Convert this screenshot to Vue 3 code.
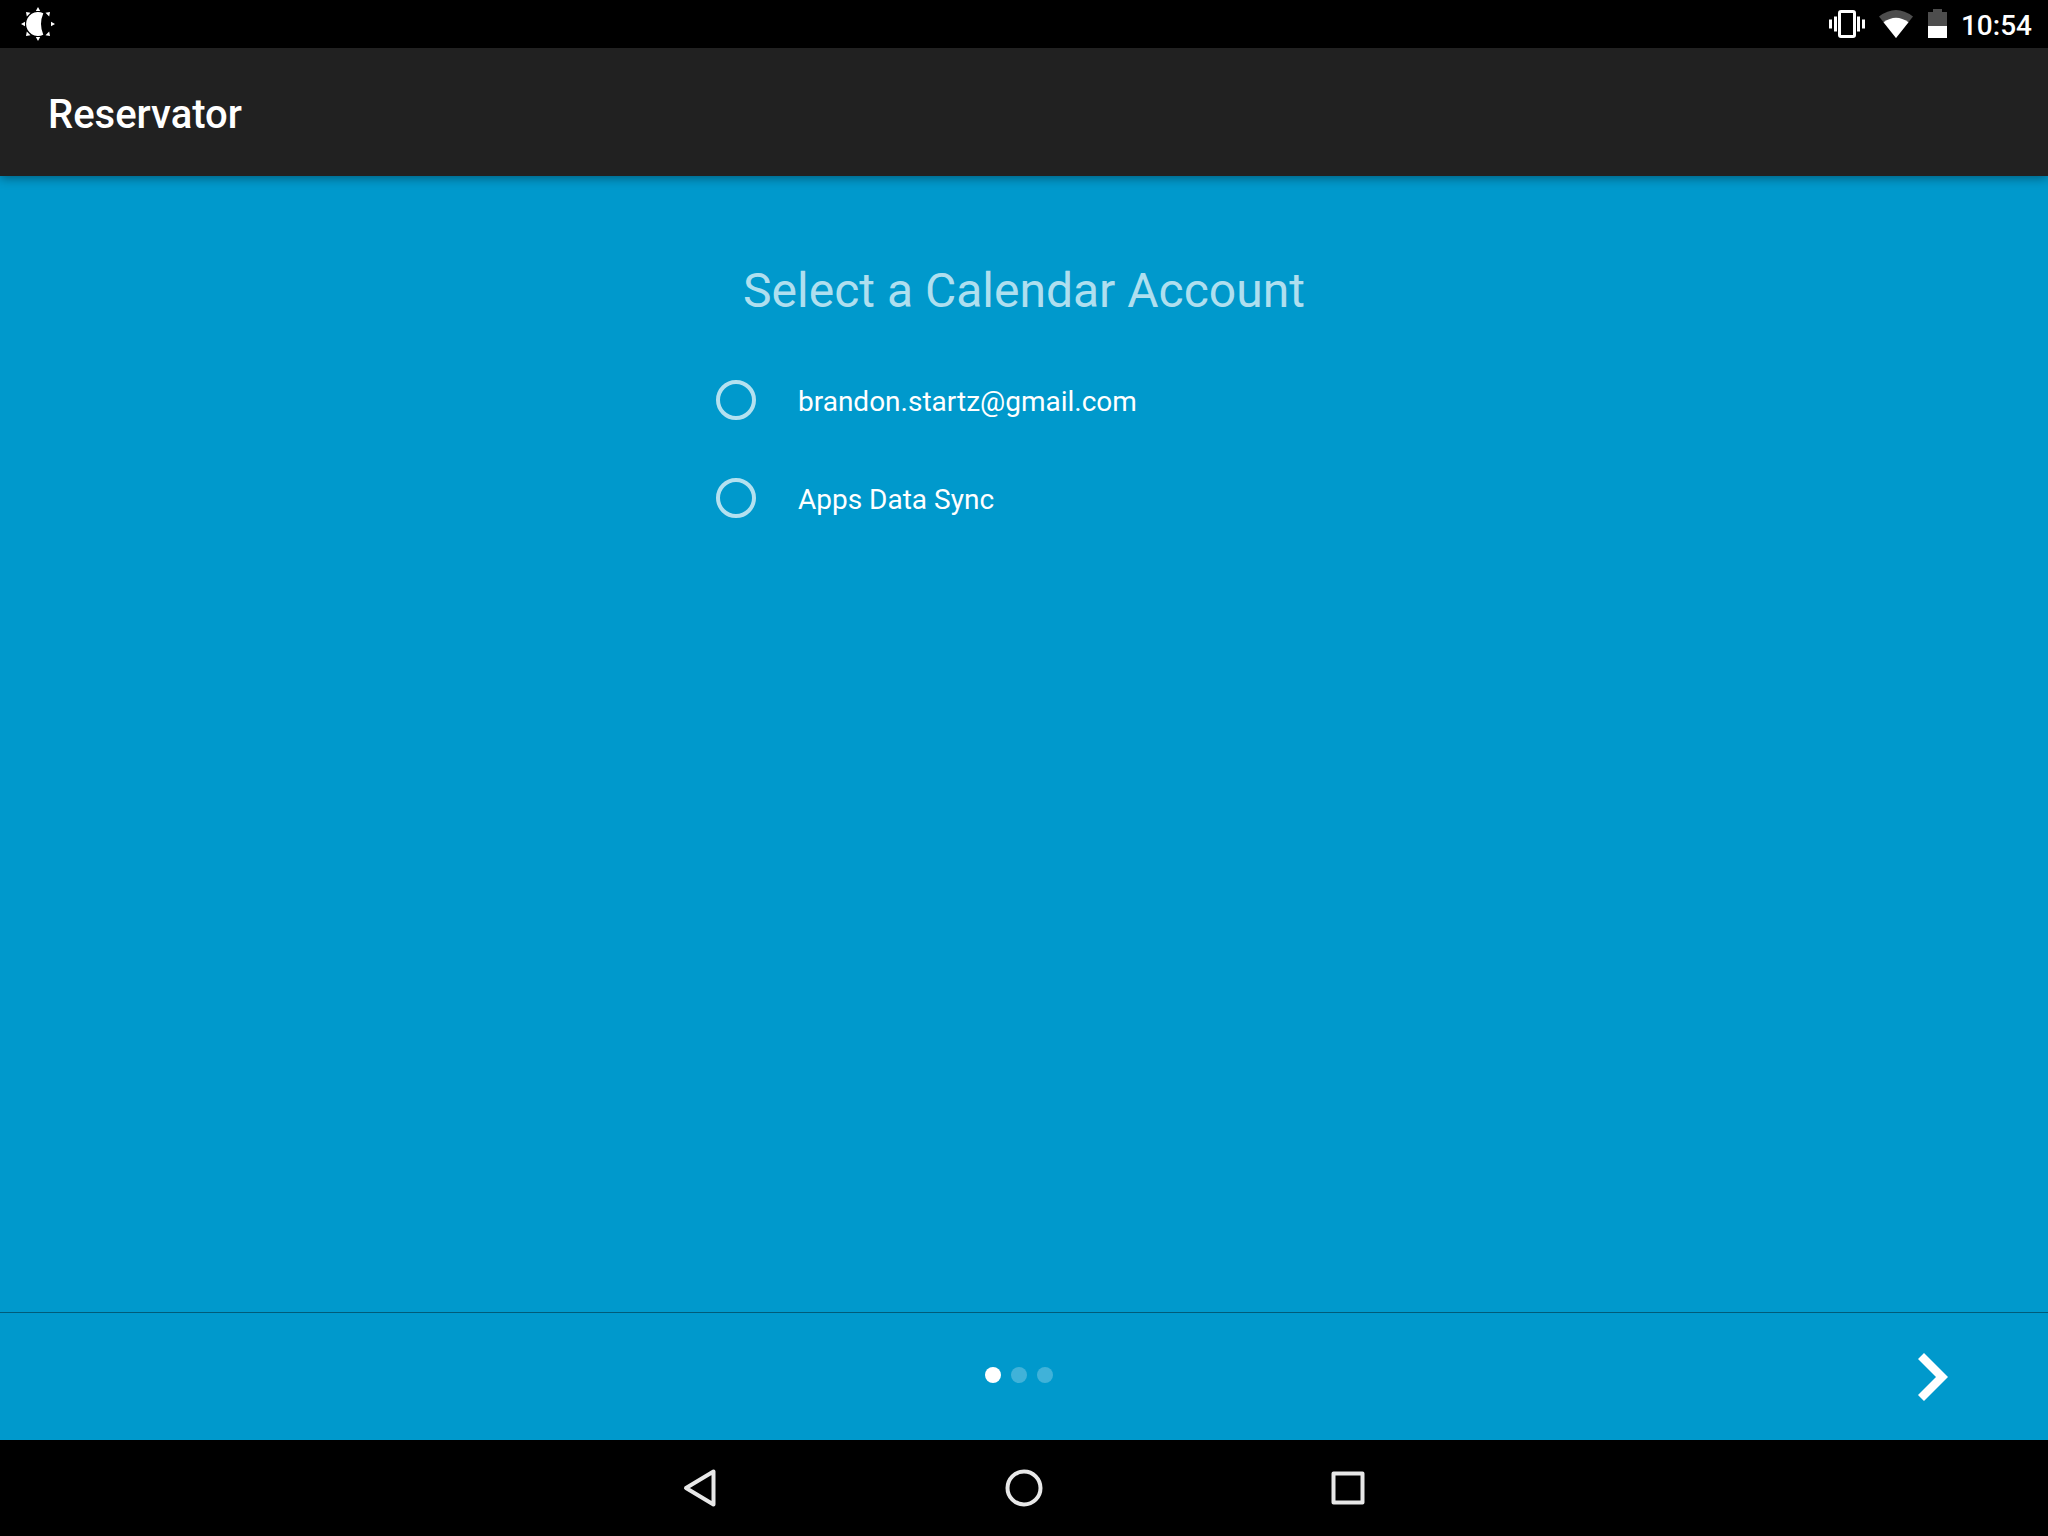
<script setup>
import { ref } from 'vue'

const accounts = ['brandon.startz@gmail.com', 'Apps Data Sync']
const selected = ref(null)
const steps = 3
const current = ref(1)
const quarters = [0, 90, 180, 270]
</script>

<template>
  <div class="screen">
    <header class="status-bar">
      <svg class="icon-sun" viewBox="0 0 36 36" width="36" height="36" aria-hidden="true">
        <path d="M23.300 7.200A12 12 0 1 0 23.300 28.800Q18.700 18 23.300 7.200Z" fill="#fff" />
        <path
          v-for="angle in quarters"
          :key="angle"
          d="M18 1L20.200 5H15.800ZM6 6L10.500 6.800L6.800 10.500Z"
          fill="#fff"
          :transform="`rotate(${angle} 18 18)`"
        />
      </svg>
      <div class="indicators">
        <svg class="icon-vibrate" viewBox="0 0 36 28" width="36" height="28" aria-hidden="true">
          <rect x="10.500" y="1.500" width="15" height="25" rx="1.500" fill="none" stroke="#fff" stroke-width="3" />
          <path d="M0 9.500h3v9H0zM5 6.500h3v15H5zM28 6.500h3v15h-3zM33 9.500h3v9h-3z" fill="#fff" />
        </svg>
        <svg class="icon-wifi" viewBox="0 0 35 28" width="35" height="28" aria-hidden="true">
          <path d="M17 28L0 6.500Q17 -6.500 34 6.500Z" fill="#4d4d4d" />
          <path d="M17 28L4.500 12.200Q17 3.200 29.500 12.200Z" fill="#fff" />
        </svg>
        <svg class="icon-battery" viewBox="0 0 19 30" width="19" height="30" aria-hidden="true">
          <path d="M0 3h5V0h9v3h5v14H0z" fill="#4d4d4d" />
          <path d="M0 17h19v12H0z" fill="#fff" />
        </svg>
        <time class="clock">10:54</time>
      </div>
    </header>

    <div class="app-bar">
      <h1 class="app-title">Reservator</h1>
    </div>

    <main class="content">
      <fieldset class="accounts">
        <legend class="heading">Select a Calendar Account</legend>
        <label v-for="account in accounts" :key="account" class="account">
          <input v-model="selected" class="radio" type="radio" name="account" :value="account" />
          <span class="account-name">{{ account }}</span>
        </label>
      </fieldset>
    </main>

    <footer class="pager">
      <div class="dots">
        <span v-for="n in steps" :key="n" class="dot" :class="{ active: n === current }"></span>
      </div>
      <button class="next" type="button" aria-label="Next">
        <svg viewBox="0 0 30 48" width="30" height="48" aria-hidden="true">
          <path d="M6 0L30 24L6 48L0 42L18 24L0 6Z" fill="#fff" />
        </svg>
      </button>
    </footer>

    <nav class="nav-bar">
      <button class="nav-button" type="button" aria-label="Back">
        <svg viewBox="0 0 48 48" width="48" height="48" aria-hidden="true">
          <path d="M37.500 7.500V40.500L10 24Z" />
        </svg>
      </button>
      <button class="nav-button" type="button" aria-label="Home">
        <svg viewBox="0 0 48 48" width="48" height="48" aria-hidden="true">
          <circle cx="24" cy="24" r="16.500" />
        </svg>
      </button>
      <button class="nav-button" type="button" aria-label="Recent apps">
        <svg viewBox="0 0 48 48" width="48" height="48" aria-hidden="true">
          <rect x="9.500" y="9.500" width="29" height="29" />
        </svg>
      </button>
    </nav>
  </div>
</template>

<style>
body {
  margin: 0;
}
</style>

<style scoped>
.screen {
  display: flex;
  flex-direction: column;
  min-height: 100vh;
  background: #0099cc;
  color: #fff;
  font-family: Roboto, "Noto Sans", sans-serif;
}

.screen svg {
  display: block;
}

.status-bar {
  display: flex;
  align-items: center;
  justify-content: space-between;
  height: 48px;
  padding: 0 16px 0 20px;
  background: #000;
}

.indicators {
  display: flex;
  align-items: center;
  gap: 14px;
}

.clock {
  padding-top: 4px;
  font-size: 28px;
  font-weight: 500;
  line-height: 32px;
}

.app-bar {
  display: flex;
  box-sizing: border-box;
  align-items: center;
  height: 128px;
  padding: 6px 48px 0;
  background: #212121;
  box-shadow: 0 2px 10px rgba(0, 0, 0, 0.4);
}

.app-title {
  margin: 0;
  font-size: 40px;
  font-weight: 500;
  line-height: 48px;
}

.content {
  display: flex;
  flex: 1;
  justify-content: center;
  padding-top: 87px;
}

.accounts {
  width: 640px;
  margin: 0;
  padding: 0;
  border: 0;
}

.heading {
  width: 100%;
  margin-bottom: 32px;
  padding: 0;
  color: rgba(255, 255, 255, 0.7);
  font-size: 48px;
  line-height: 56px;
  text-align: center;
}

.account {
  display: flex;
  align-items: center;
  gap: 42px;
  height: 98px;
  padding-left: 12px;
  font-size: 28px;
  line-height: 32px;
}

.account-name {
  padding-top: 3px;
}

.radio {
  box-sizing: border-box;
  width: 40px;
  height: 40px;
  margin: 0;
  border: 4px solid rgba(255, 255, 255, 0.7);
  border-radius: 50%;
  appearance: none;
}

.radio:checked {
  background: radial-gradient(#fff 50%, transparent 54%);
}

.pager {
  display: grid;
  grid-template-columns: 1fr auto 1fr;
  align-items: center;
  height: 127px;
  border-top: 1px solid #005c7a;
}

.dots {
  display: flex;
  grid-column: 2;
  padding-bottom: 3px;
}

.dot {
  width: 16px;
  height: 16px;
  margin-right: 10px;
  border-radius: 50%;
  background: rgba(255, 255, 255, 0.25);
}

.dot.active {
  background: #fff;
}

.next {
  justify-self: end;
  margin-right: 84px;
  padding: 16px;
  border: 0;
  background: none;
}

.nav-bar {
  display: flex;
  align-items: center;
  justify-content: center;
  gap: 164px;
  height: 96px;
  background: #000;
}

.nav-button {
  display: flex;
  align-items: center;
  justify-content: center;
  width: 160px;
  height: 96px;
  padding: 0;
  border: 0;
  background: none;
}

.nav-button path,
.nav-button circle,
.nav-button rect {
  fill: none;
  stroke: #e8e8e8;
  stroke-width: 4;
  stroke-linejoin: round;
}
</style>
